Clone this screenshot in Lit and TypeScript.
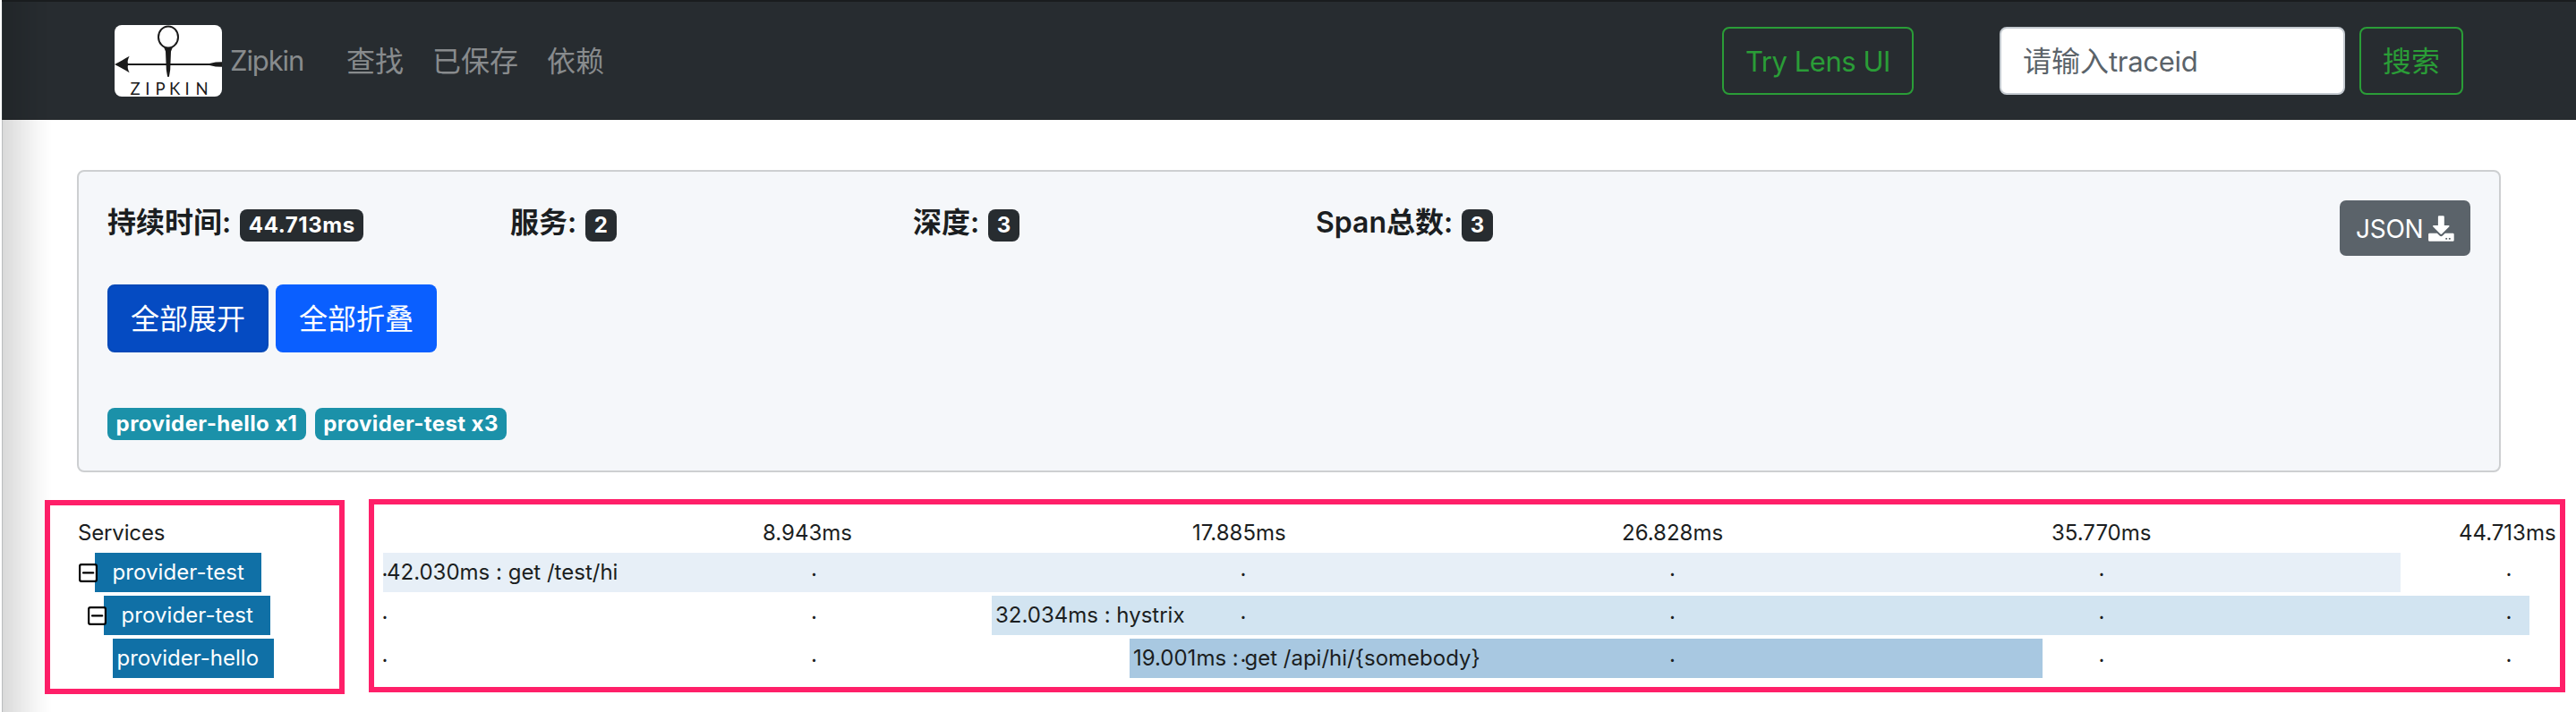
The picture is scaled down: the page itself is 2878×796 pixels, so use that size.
import { LitElement, html, css, svg } from "lit";
import { customElement } from "lit/decorators.js";
import { styleMap } from "lit/directives/style-map.js";

interface Span {
  service: string;
  label: string;
  indent: number;
  nameWidth: number;
  parent: boolean;
  start: number;
  length: number;
  color: string;
}

const SPANS: Span[] = [
  { service: "provider-test", label: "42.030ms : get /test/hi", indent: 20, nameWidth: 186, parent: true, start: 0, length: 2254, color: "#e7eff7" },
  { service: "provider-test", label: "32.034ms : hystrix", indent: 30, nameWidth: 186, parent: true, start: 680, length: 1718, color: "#d2e4f1" },
  { service: "provider-hello", label: "19.001ms : get /api/hi/{somebody}", indent: 40, nameWidth: 180, parent: false, start: 834, length: 1020, color: "#a8c8e1" },
];

const TICKS = ["8.943ms", "17.885ms", "26.828ms", "35.770ms", "44.713ms"];

const STATS = [
  { name: "持续时间:", value: "44.713ms" },
  { name: "服务:", value: "2" },
  { name: "深度:", value: "3" },
  { name: "Span总数:", value: "3" },
];

const logo = svg`
  <svg class="logo" viewBox="0 0 120 80" width="120" height="80">
    <ellipse cx="60" cy="13.4" rx="11" ry="12" fill="none" stroke="#1a1a1a" stroke-width="2"/>
    <path fill="#1a1a1a" d="M55 24.6Q60 27.6 65 24.6L63 29.5L62.2 50L61 57.2Q60 59 59 57.2L57.8 50L57 29.5Z"/>
    <path fill="#1a1a1a" d="M0 44C6 41 11 38 16.6 34.8C14.6 39 14.4 41 15 43L106 43L113 41.4L120 41.2V46.8L113 46.6L106 45L15 45C14.4 47 14.6 49 16.6 53.2C11 50 6 47 0 44Z"/>
    <text class="logo-text" y="78.4" x="17.6 34.2 45.6 61 78.4 90.4">ZIPKIN</text>
  </svg>`;

const minusBox = svg`
  <svg class="toggle" viewBox="0 0 21 21" width="21" height="21">
    <rect x="1.1" y="1.1" width="18.8" height="18.8" rx="1.8" fill="#fff" stroke="#000" stroke-width="2.2"/>
    <path d="M5 10.4H16.2" stroke="#000" stroke-width="2.2" stroke-linecap="round"/>
  </svg>`;

const downloadIcon = svg`
  <svg class="download" viewBox="0 0 29 29" width="29" height="29">
    <path fill="#fff" d="M12 .2H16.7Q17.8 .2 17.8 1.3V11H22.6Q24.2 11.2 23.2 12.5L15.2 20.6Q14.3 21.4 13.4 20.6L5.4 12.5Q4.4 11.2 6 11H10.9V1.3Q10.9 .2 12 .2Z"/>
    <path fill="#fff" fill-rule="evenodd" d="M1.4 19.7H9.8L12.4 22.3Q14.3 24 16.2 22.3L18.8 19.7H27.4Q28.7 19.7 28.7 21V27.4Q28.7 28.7 27.4 28.7H1.4Q.1 28.7 .1 27.4V21Q.1 19.7 1.4 19.7ZM19.3 25V26.8H21.1V25ZM22.9 25V26.8H24.7V25Z"/>
  </svg>`;

@customElement("app-root")
export class AppRoot extends LitElement {
  static styles = css`
    :host {
      display: block;
      position: relative;
      box-sizing: border-box;
      width: 2878px;
      height: 796px;
      overflow: hidden;
      background: #fff;
      color: #1b1e21;
      font-family: Inter, "Noto Sans CJK SC", sans-serif;
      font-size: 32px;
      line-height: 48px;
      white-space: nowrap;
    }
    * { box-sizing: border-box; }
    svg { display: block; flex: none; }
    .edge {
      position: absolute;
      left: 2px;
      top: 2px;
      width: 56px;
      height: 794px;
      background: linear-gradient(90deg, rgba(0,0,0,.15), rgba(0,0,0,.09) 35%, rgba(0,0,0,.03) 70%, rgba(0,0,0,0));
      border-left: 1px solid rgba(60,70,72,.35);
    }
    nav {
      display: flex;
      align-items: center;
      height: 134px;
      margin-left: 2px;
      padding: 1px 126px 0 126px;
      border-top: 2px solid #191c1e;
      border-bottom: 1px solid #1f2326;
      background: #272c30;
      color: #888b8d;
    }
    .logo { border-radius: 8px; background: #fff; overflow: visible; }
    .logo-text { font-family: Lato, sans-serif; font-size: 18.5px; fill: #1a1a1a; }
    .brand { margin: 0 0 1px 9px; width: 82px; font-size: 31px; letter-spacing: -1.1px; }
    .links { display: flex; gap: 32px; margin-left: 48px; flex: 1; padding-top: 1px; }
    .btn {
      display: flex;
      align-items: center;
      justify-content: center;
      height: 76px;
      padding-top: 1px;
      border: 2px solid #2a9d37;
      border-radius: 8px;
      color: #2a9d37;
    }
    .lens { width: 214px; margin-right: 96px; font-size: 31px; letter-spacing: -.45px; }
    .field {
      display: flex;
      align-items: center;
      width: 386px;
      height: 76px;
      margin-right: 16px;
      padding: 1px 0 0 24px;
      border: 2px solid #c4cad0;
      border-radius: 8px;
      background: #fff;
      color: #5b636a;
    }
    .latin { font-size: 31px; letter-spacing: -.3px; }
    .search { width: 116px; }
    .card {
      width: 2708px;
      height: 338px;
      margin: 56px 0 0 86px;
      padding: 32px;
      border: 2px solid #cdcfd1;
      border-radius: 8px;
      background: #f5f7fa;
    }
    .stats { display: flex; height: 62px; }
    .stat { display: flex; width: 450px; font-weight: 600; }
    .stat-name { margin-right: 10px; line-height: 50px; }
    .badge {
      display: flex;
      align-items: center;
      justify-content: center;
      height: 36px;
      padding: 0 9.6px;
      border-radius: 8px;
      background: #272c30;
      color: #fff;
      font-size: 24px;
      font-weight: 700;
      letter-spacing: .4px;
      line-height: 36px;
    }
    .stat .badge { margin-top: 10px; padding-bottom: 1px; }
    .stat:first-child .badge { letter-spacing: .6px; }
    .json {
      display: flex;
      align-items: center;
      width: 146px;
      height: 62px;
      margin-left: auto;
      padding-left: 18px;
      border-radius: 7px;
      background: #5b636a;
      color: #fff;
      font-size: 28px;
      gap: 6px;
    }
    .json-text { padding-top: 2px; letter-spacing: -.25px; }
    .actions { display: flex; gap: 8px; margin-top: 32px; }
    .solid { width: 180px; border: 0; background: #0a5fff; color: #fff; }
    .pressed { background: #054bc2; border: 2px solid #0549b8; }
    .services { display: flex; gap: 10px; margin-top: 62px; }
    .services .badge { background: #1b91a9; }
    .hello { width: 222px; }
    .test { width: 214px; }
    .trace {
      display: flex;
      align-items: flex-start;
      margin: 30px 0 0 50px;
      gap: 27px;
      font-size: 24px;
      line-height: 44px;
    }
    .panel { border: 6px solid #ff1f69; }
    .names { width: 335px; height: 217px; margin-top: 1px; padding-left: 30px; }
    .chart { width: 2454px; height: 216px; padding-left: 10px; }
    .heading { height: 54px; padding-top: 10px; }
    .names .heading { height: 53px; padding: 9px 0 0 1px; letter-spacing: -.15px; }
    .name-row { display: flex; align-items: center; height: 44px; margin-bottom: 4px; }
    .toggle { position: relative; margin: 0 -3px 0 -18px; z-index: 1; }
    .name {
      height: 44px;
      padding-left: 4.5px;
      background: #1070a6;
      color: #fff;
      line-height: 43px;
    }
    .name.parent { padding-left: 19.5px; letter-spacing: .08px; }
    .ticks { display: grid; grid-template-columns: 480px 480px 480px 455px 110px; padding-left: 424px; }
    .span-row { display: grid; height: 44px; margin-bottom: 4px; }
    .bar { grid-area: 1 / 1; height: 44px; padding-left: 4px; line-height: 43px; }
    .dots {
      grid-area: 1 / 1;
      display: grid;
      grid-template-columns: 479.5px 479.5px 479.5px 479.5px 455px 20px;
      margin-left: -1.5px;
      height: 44px;
      line-height: 35px;
    }
  `;

  render() {
    return html`
      <nav>
        ${logo}
        <span class="brand">Zipkin</span>
        <div class="links"><span>查找</span><span>已保存</span><span>依赖</span></div>
        <div class="btn lens">Try Lens UI</div>
        <div class="field"><span>请输入</span><span class="latin">traceid</span></div>
        <div class="btn search">搜索</div>
      </nav>
      <section class="card">
        <div class="stats">
          ${STATS.map((s) => html`<div class="stat"><span class="stat-name">${s.name}</span><span class="badge">${s.value}</span></div>`)}
          <div class="json"><span class="json-text">JSON</span>${downloadIcon}</div>
        </div>
        <div class="actions">
          <div class="btn solid pressed">全部展开</div>
          <div class="btn solid">全部折叠</div>
        </div>
        <div class="services">
          <span class="badge hello">provider-hello x1</span>
          <span class="badge test">provider-test x3</span>
        </div>
      </section>
      <section class="trace">
        <div class="panel names">
          <div class="heading">Services</div>
          ${SPANS.map((s) => html`
            <div class="name-row" style=${styleMap({ paddingLeft: `${s.indent}px` })}>
              ${s.parent ? minusBox : ""}
              <div class="name ${s.parent ? "parent" : ""}" style=${styleMap({ width: `${s.nameWidth}px` })}>${s.service}</div>
            </div>`)}
        </div>
        <div class="panel chart">
          <div class="heading ticks">${TICKS.map((t) => html`<span>${t}</span>`)}</div>
          ${SPANS.map((s) => html`
            <div class="span-row">
              <div class="bar" style=${styleMap({ marginLeft: `${s.start}px`, width: `${s.length}px`, background: s.color })}>${s.label}</div>
              <div class="dots">${[0, 1, 2, 3, 4, 5].map(() => html`<span>.</span>`)}</div>
            </div>`)}
        </div>
      </section>
      <div class="edge"></div>
    `;
  }
}
